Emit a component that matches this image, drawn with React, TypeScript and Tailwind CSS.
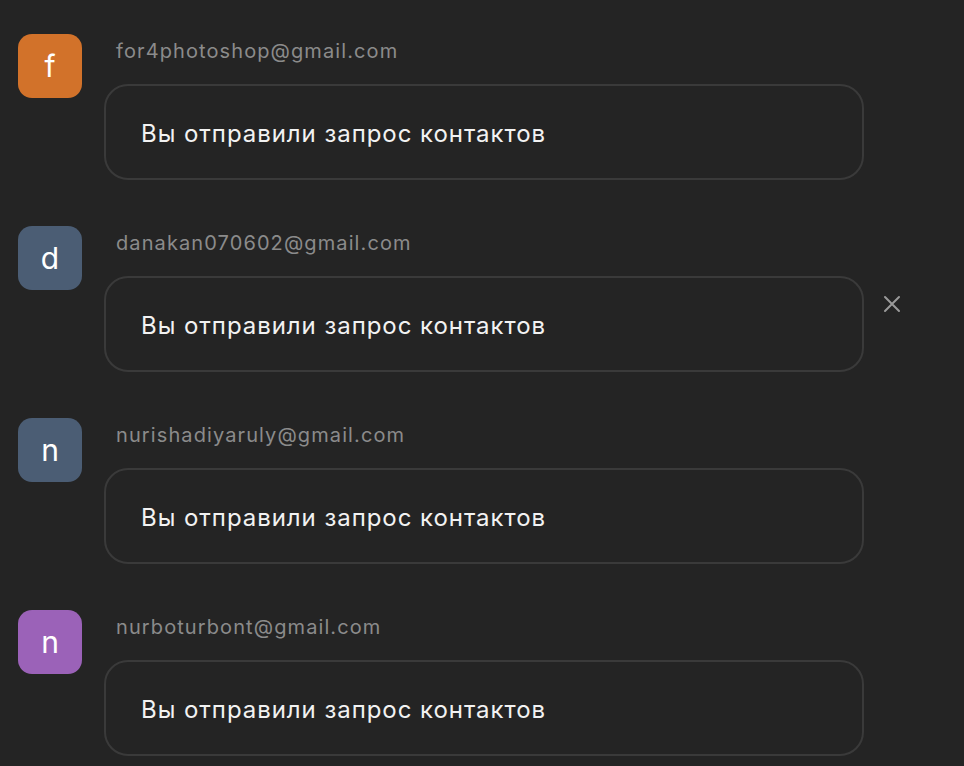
import React from "react";

type Request = {
  email: string;
  letter: string;
  color: string;
  showClose?: boolean;
};

const requests: Request[] = [
  { email: "for4photoshop@gmail.com", letter: "f", color: "bg-[#d2722a]" },
  { email: "danakan070602@gmail.com", letter: "d", color: "bg-[#4b5d74]", showClose: true },
  { email: "nurishadiyaruly@gmail.com", letter: "n", color: "bg-[#4b5d74]" },
  { email: "nurboturbont@gmail.com", letter: "n", color: "bg-[#9b62b8]" },
];

const CloseIcon: React.FC = () => (
  <svg width="18" height="18" viewBox="0 0 18 18" fill="none">
    <path d="M2 2L16 16M16 2L2 16" stroke="#9a9a9a" strokeWidth="2" strokeLinecap="round" />
  </svg>
);

const RequestRow: React.FC<{ item: Request }> = ({ item }) => {
  return (
    <div className="flex mb-[46px]">
      <div
        className={`w-16 h-16 shrink-0 rounded-[14px] ${item.color} flex items-center justify-center text-white text-[30px] leading-none`}
      >
        {item.letter}
      </div>
      <div className="ml-[22px] flex flex-col">
        <div className="h-[50px] pl-3 pt-[3px] text-[20px] leading-[28px] tracking-[1.1px] text-[#8b8b8b]">
          {item.email}
        </div>
        <div className="flex items-start">
          <div className="w-[760px] h-[96px] border-2 border-[#3a3a3a] rounded-[24px] px-[35px] pt-[3px] flex items-center text-[24px] tracking-[0.95px] text-[#f2f2f2]">
            Вы отправили запрос контактов
          </div>
          {item.showClose && (
            <button className="ml-[19px] mt-[19px] p-0 flex items-center justify-center">
              <CloseIcon />
            </button>
          )}
        </div>
      </div>
    </div>
  );
};

const App: React.FC = () => {
  return (
    <div
      className="min-h-[766px] w-full bg-[#242424] pt-[34px] pl-[18px]"
      style={{ fontFamily: "Inter, 'Noto Sans', sans-serif" }}
    >
      {requests.map((item, i) => (
        <RequestRow key={i} item={item} />
      ))}
    </div>
  );
};

export default App;
